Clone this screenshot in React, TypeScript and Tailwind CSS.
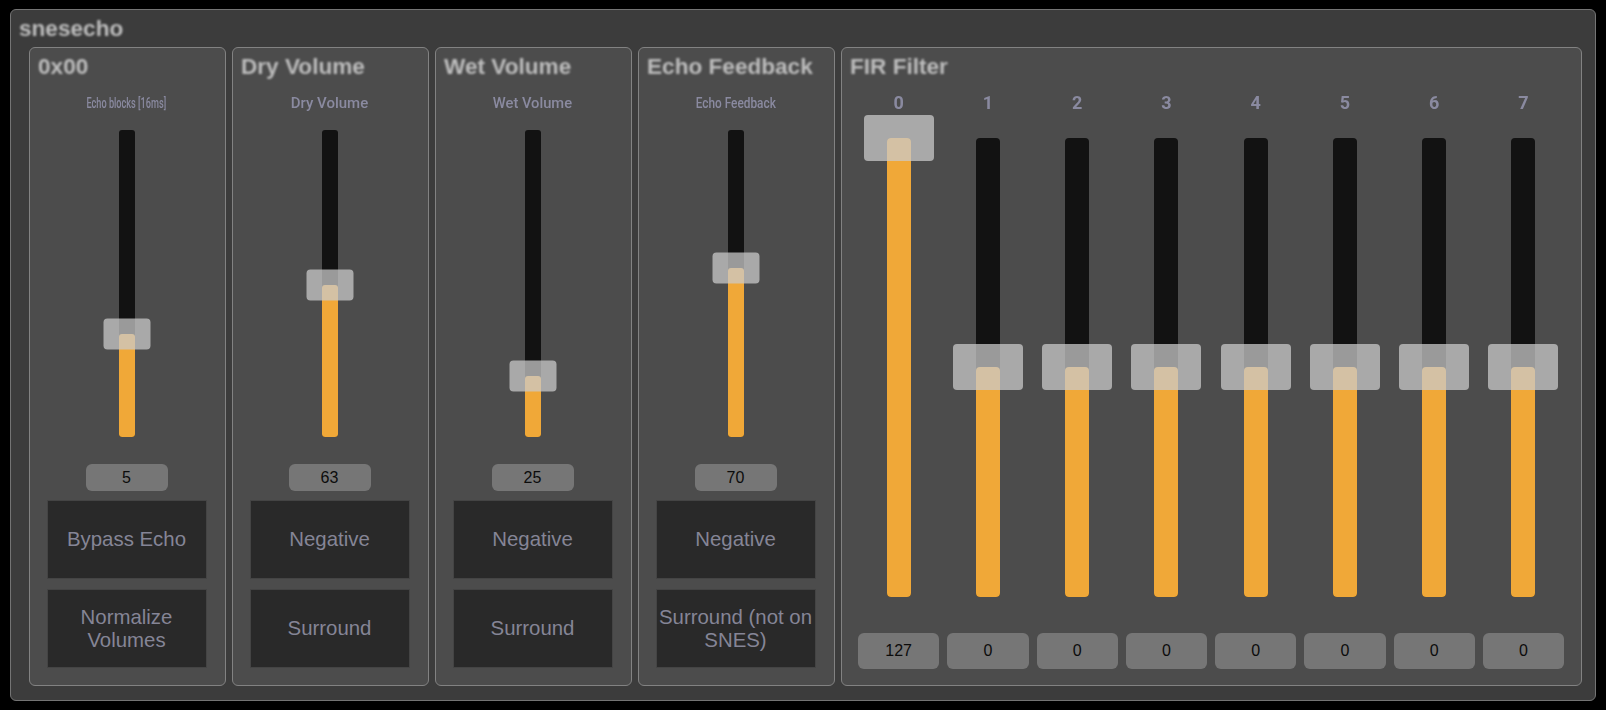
import React from "react";

const sans = "font-['Liberation_Sans',Arial,sans-serif]";

function Slider({ fraction, big }: { fraction: number; big?: boolean }) {
  const pct = `${fraction * 100}%`;
  return (
    <div
      className={
        big
          ? "relative w-[24px] h-[459px] bg-[#121212] rounded-[4px] blur-[0.5px]"
          : "relative w-[16px] h-[307px] bg-[#121212] rounded-[3px] blur-[0.5px]"
      }
    >
      <div
        className={
          big
            ? "absolute bottom-0 inset-x-0 bg-[#f0a838] rounded-[4px]"
            : "absolute bottom-0 inset-x-0 bg-[#f0a838] rounded-[3px]"
        }
        style={{ height: pct }}
      />
      <div
        className={
          big
            ? "absolute left-1/2 -translate-x-1/2 translate-y-1/2 w-[70px] h-[46px] bg-[#cbcbcbbd] rounded-[4px]"
            : "absolute left-1/2 -translate-x-1/2 translate-y-1/2 w-[47px] h-[31px] bg-[#cbcbcbbd] rounded-[4px]"
        }
        style={{ bottom: pct }}
      />
    </div>
  );
}

function ValueBox({ value, big }: { value: number; big?: boolean }) {
  return (
    <div
      className={`${sans} flex items-center justify-center bg-[#767676] rounded-[6px] text-[16px] text-[#0c0c0c] ${
        big ? "w-full h-[36px] mt-[36px]" : "w-[82px] h-[27px] mt-[27px]"
      }`}
    >
      {value}
    </div>
  );
}

function ToggleButton({ label }: { label: string }) {
  return (
    <button
      className={`${sans} w-[160px] h-[79px] flex items-center justify-center text-center bg-[#292929] border border-[#444444] text-[20.4px] leading-[23px] text-[#858596]`}
    >
      {label}
    </button>
  );
}

function Heading({ children }: { children: React.ReactNode }) {
  return (
    <h2 className={`${sans} self-start h-[24px] ml-[8px] text-[22.6px] leading-[26px] font-bold text-[#bebebe] blur-[0.8px] whitespace-nowrap`}>
      {children}
    </h2>
  );
}

interface Strip {
  heading: string;
  label: string;
  labelScale: string;
  value: number;
  max: number;
  buttons: string[];
}

const strips: Strip[] = [
  { heading: "0x00", label: "Echo blocks [16ms]", labelScale: "scale-x-[0.61]", value: 5, max: 14.85, buttons: ["Bypass Echo", "Normalize Volumes"] },
  { heading: "Dry Volume", label: "Dry Volume", labelScale: "scale-x-[1]", value: 63, max: 127, buttons: ["Negative", "Surround"] },
  { heading: "Wet Volume", label: "Wet Volume", labelScale: "scale-x-[0.98]", value: 25, max: 125, buttons: ["Negative", "Surround"] },
  { heading: "Echo Feedback", label: "Echo Feedback", labelScale: "scale-x-[0.79]", value: 70, max: 127, buttons: ["Negative", "Surround (not on SNES)"] },
];

const firValues = [127, 0, 0, 0, 0, 0, 0, 0];

function StripPanel({ strip }: { strip: Strip }) {
  return (
    <section className="w-[197px] h-[639px] flex flex-col items-center pt-[6px] pr-[2px] bg-[#4c4c4c] border border-[#828282] rounded-[6px]">
      <Heading>{strip.heading}</Heading>
      <div
        className={`font-['Roboto',sans-serif] font-medium mt-[17px] h-[16px] text-[15px] leading-[16px] text-[#8a8aa0] blur-[0.6px] whitespace-nowrap ${strip.labelScale}`}
      >
        {strip.label}
      </div>
      <div className="mt-[19px]">
        <Slider fraction={strip.value / strip.max} />
      </div>
      <ValueBox value={strip.value} />
      <div className="mt-[9px] flex flex-col gap-[10px]">
        {strip.buttons.map((b) => (
          <ToggleButton key={b} label={b} />
        ))}
      </div>
    </section>
  );
}

export default function App() {
  return (
    <div className="w-[1606px] h-[710px] bg-black pt-[9px] px-[10px] overflow-hidden">
      <div className="w-[1586px] h-[692px] bg-[#3c3c3c] border border-[#747474] rounded-[6px] pt-[6px] pl-[18px]">
        <h1 className={`${sans} -ml-[10px] h-[24px] text-[22.6px] leading-[26px] font-bold text-[#bebebe] blur-[0.8px]`}>
          snesecho
        </h1>
        <div className="mt-[7px] flex gap-[6px]">
          {strips.map((s) => (
            <StripPanel key={s.heading} strip={s} />
          ))}
          <section className="w-[741px] h-[639px] flex flex-col pt-[6px] bg-[#4c4c4c] border border-[#828282] rounded-[6px]">
            <Heading>FIR Filter</Heading>
            <div className="mt-[17px] pl-[16px] pr-[17px] grid grid-cols-8 gap-x-[8px]">
              {firValues.map((v, i) => (
                <div key={i} className="flex flex-col items-center">
                  <div className="font-['Roboto',sans-serif] font-bold h-[16px] text-[18px] leading-[16px] text-[#8a8aa0] blur-[0.6px]">
                    {i}
                  </div>
                  <div className="mt-[27px]">
                    <Slider big fraction={(v + 128) / 255} />
                  </div>
                  <ValueBox big value={v} />
                </div>
              ))}
            </div>
          </section>
        </div>
      </div>
    </div>
  );
}
